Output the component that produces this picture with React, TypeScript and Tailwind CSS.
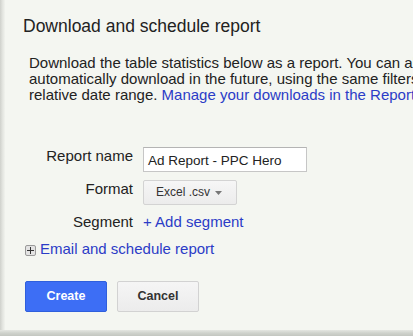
import React from "react";

export default function App() {
  const font = { fontFamily: '"Liberation Sans", Arial, Helvetica, sans-serif' };
  return (
    <div
      className="w-[413px] h-[336px] overflow-hidden flex flex-col bg-[#f4f6f1] text-[#222]"
      style={font}
    >
      <div className="flex flex-1 min-h-0">
        <div className="w-[5px] shrink-0 bg-gradient-to-r from-[#cfd1cc] via-[#e2e4df] to-[#f1f3ee]" />
        <div className="flex-1 min-w-0 flex flex-col">
          <div className="pt-[16px] pl-[18px] text-[17.5px] leading-[20px] whitespace-nowrap">
            Download and schedule report
          </div>
          <div className="mt-[19px] pl-[24px] text-[15px] leading-[16px] whitespace-nowrap">
            <div>Download the table statistics below as a report. You can also schedule this report to</div>
            <div>automatically download in the future, using the same filters and</div>
            <div>
              relative date range.{" "}
              <span className="text-[#2b3cc7]">Manage your downloads in the Report Center.</span>
            </div>
          </div>

          <div className="mt-[44px] grid grid-cols-[128px_1fr] gap-x-[10px] gap-y-[8px] items-start">
            <div className="text-right text-[15px] leading-[18px] whitespace-nowrap">Report name</div>
            <div className="w-[164px] h-[25px] box-border border border-[#c6c6c6] border-t-[#b4b4b4] bg-white pl-[4px] pt-[1px] text-[13.5px] leading-[23px] whitespace-nowrap overflow-hidden">
              Ad Report - PPC Hero
            </div>

            <div className="text-right text-[15px] leading-[18px]">Format</div>
            <div className="w-[94px] h-[25px] box-border border border-[#d3d3d3] rounded-[2px] bg-gradient-to-b from-[#f6f6f6] to-[#ececec] flex items-center pl-[12px] text-[12px] leading-[23px] text-[#333] whitespace-nowrap">
              Excel .csv
              <svg width="7" height="4" viewBox="0 0 7 4" className="ml-[5px] mt-[1px]">
                <path d="M0 0 L7 0 L3.5 4 Z" fill="#777" />
              </svg>
            </div>

            <div className="text-right text-[15px] leading-[18px]">Segment</div>
            <div className="text-[15px] leading-[18px] text-[#2b3cc7] whitespace-nowrap">+ Add segment</div>
          </div>

          <div className="mt-[9px] pl-[20px] flex items-center text-[15px] leading-[18px] whitespace-nowrap">
            <div className="w-[11px] h-[11px] box-border border border-[#9a9a9a] rounded-[2px] bg-[#e3e3e3] flex items-center justify-center mr-[4px] mt-[3px]">
              <svg width="7" height="7" viewBox="0 0 7 7">
                <path d="M3.5 0 V7 M0 3.5 H7" stroke="#333" strokeWidth="1" />
              </svg>
            </div>
            <span className="text-[#2b3cc7]">Email and schedule report</span>
          </div>

          <div className="mt-[23px] pl-[20px] flex gap-[10px]">
            <div className="w-[82px] h-[31px] box-border border border-[#2f5fdc] rounded-[2px] bg-[#3d6ef5] text-white font-bold text-[12.5px] leading-[29px] text-center">
              Create
            </div>
            <div className="w-[82px] h-[31px] box-border border border-[#d2d2d2] rounded-[2px] bg-gradient-to-b from-[#f5f5f5] to-[#ececec] text-[#333] font-bold text-[12.5px] leading-[29px] text-center">
              Cancel
            </div>
          </div>
        </div>
      </div>
      <div className="h-[6px] shrink-0 bg-gradient-to-b from-[#e4e6e1] via-[#cfd2cc] to-[#c3c6c0]" />
    </div>
  );
}
